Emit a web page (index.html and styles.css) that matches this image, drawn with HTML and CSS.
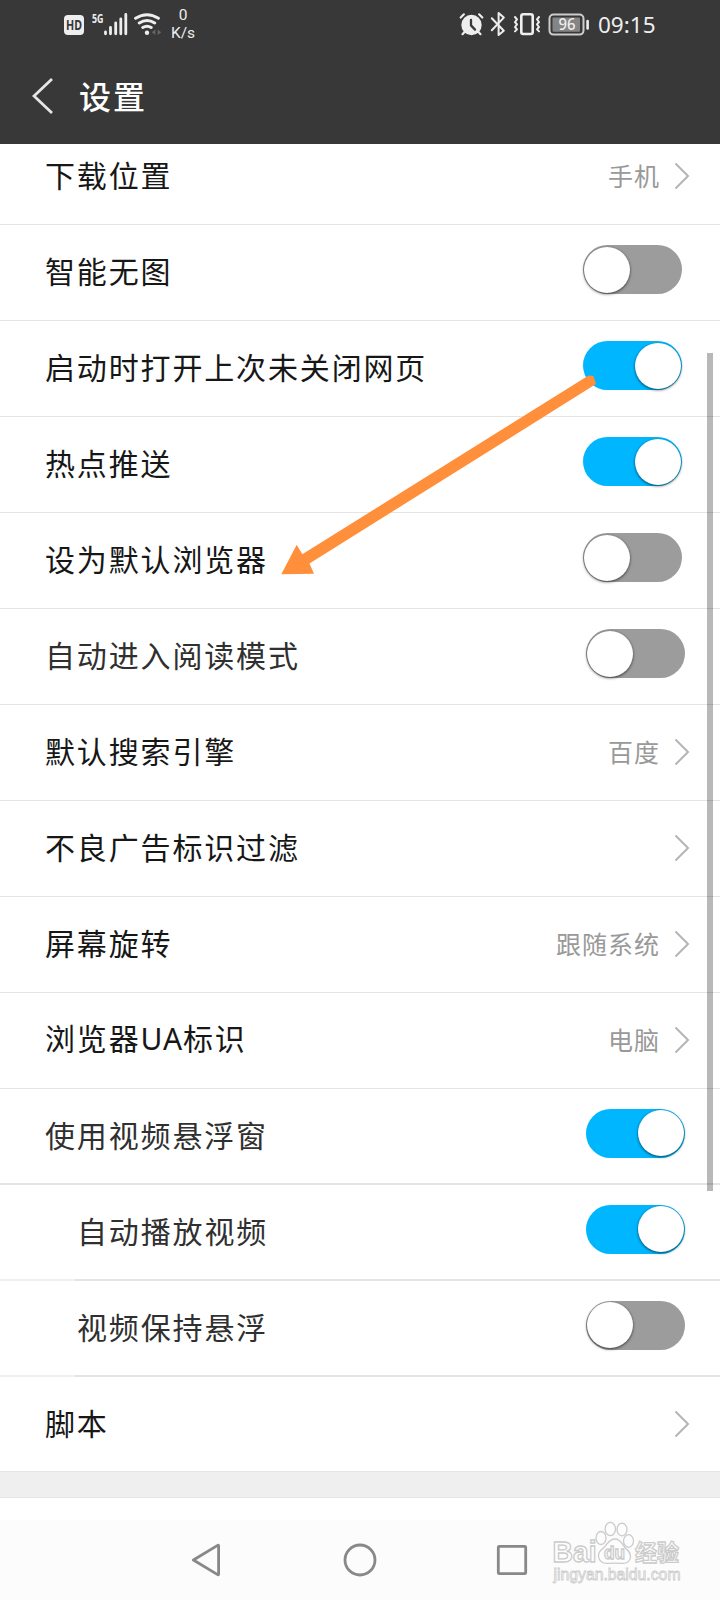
FILE: index.html
```html
<!DOCTYPE html>
<html lang="zh-CN">
<head>
    <meta charset="UTF-8">
    <meta name="viewport" content="width=device-width, initial-scale=1.0">
    <title>设置</title>
    <link rel="stylesheet" href="styles.css">
</head>
<body>
    <div class="app-container">
        <!-- Header -->
        <header class="app-header">
            <div class="status-bar">
                <div class="status-left">
                    <svg width="64" height="40" viewBox="64 4 64 40">
                        <rect x="64" y="15" width="20" height="20" rx="4" fill="#eee"/>
                        <text class="hd" x="66" y="30" textLength="16" lengthAdjust="spacingAndGlyphs">HD</text>
                        <text class="net" x="92" y="22.6" textLength="11.5" lengthAdjust="spacingAndGlyphs">5G</text>
                        <path d="M105.5 32v1.8M110.5 27.5v6.3M115.7 23v10.8M120.8 19v14.8M125.8 14.5v19.3" stroke="#eee" stroke-width="2.8" stroke-linecap="round"/>
                    </svg>
                    <svg class="wifi" width="30" height="26" viewBox="133 11 30 26" fill="none" stroke="#eee" stroke-width="3" stroke-linecap="round">
                        <path d="M135.6 18.3q11.4-7.2 22.8 0M139.3 23q7.7-5 15.4 0M142.8 27.5q4.2-2.6 8.4 0"/>
                        <circle cx="147" cy="32.8" r="2.2" fill="#eee" stroke="none"/>
                        <path d="M155.3 29.5v5.5l-3.5-2.7zM157.7 29.5v5.5l3.5-2.7z" fill="#666" stroke="none"/>
                    </svg>
                    <div class="net-speed">
                        <span>0</span>
                        <span>K/s</span>
                    </div>
                </div>
                <div class="status-right">
                    <svg width="132" height="26" viewBox="458 11 132 26" fill="none" stroke="#eee" stroke-linecap="round" stroke-linejoin="round">
                        <!-- alarm -->
                        <circle cx="471.5" cy="25" r="10.2" fill="#eee" stroke="none"/>
                        <path d="M460.7 17.5l3.2-3.2M482.3 17.5l-3.2-3.2M464.5 32l-2 2.2M478.5 32l2 2.2" stroke-width="2.2"/>
                        <path d="M471 20v5.4l4 4.2" stroke="#383838" stroke-width="2.3"/>
                        <!-- bluetooth -->
                        <path d="M491.8 18.2l12 12.6-5.2 4.2V13l5.2 4.6-12 12.6" stroke-width="2"/>
                        <!-- vibrate -->
                        <rect x="521.3" y="14.2" width="11.4" height="19.8" rx="2" stroke-width="2.6"/>
                        <path d="M515 17l2 2.4-2 2.6 2 2.4-2 2.6 2 2.4-2 2M539 17l-2 2.4 2 2.6-2 2.4 2 2.6-2 2.4 2 2" stroke-width="2"/>
                        <!-- battery -->
                        <rect x="549.5" y="14.6" width="34" height="20" rx="4" stroke="#ccc" stroke-width="2"/>
                        <rect x="552.5" y="17.5" width="27.5" height="14.2" rx="1" fill="#858585" stroke="none"/>
                        <path d="M587.6 21v7.5" stroke-width="2.6"/>
                        <text class="battery-level" x="558.5" y="30" textLength="17" lengthAdjust="spacingAndGlyphs">96</text>
                    </svg>
                    <span class="clock">09:15</span>
                </div>
            </div>
            <div class="title-bar">
                <svg class="back" width="22" height="38" viewBox="0 0 22 38">
                    <path d="M20 2L2 19 20 36" fill="none" stroke="#e6e6e6" stroke-width="2.8"/>
                </svg>
                <h1 class="title">设置</h1>
            </div>
        </header>

        <!-- Settings list -->
        <main class="settings">
            <div class="settings-list">
                <div class="row">
                    <span class="label">下载位置</span>
                    <span class="value">手机</span>
                    <svg class="arrow" viewBox="0 0 16 28"><path d="M1.5 1.5L14 14 1.5 26.5"/></svg>
                </div>
                <div class="row">
                    <span class="label">智能无图</span>
                    <span class="switch"></span>
                </div>
                <div class="row">
                    <span class="label">启动时打开上次未关闭网页</span>
                    <span class="switch on"></span>
                </div>
                <div class="row">
                    <span class="label">热点推送</span>
                    <span class="switch on"></span>
                </div>
                <div class="row">
                    <span class="label">设为默认浏览器</span>
                    <span class="switch"></span>
                </div>
                <div class="row soft">
                    <span class="label">自动进入阅读模式</span>
                    <span class="switch"></span>
                </div>
                <div class="row">
                    <span class="label">默认搜索引擎</span>
                    <span class="value">百度</span>
                    <svg class="arrow" viewBox="0 0 16 28"><path d="M1.5 1.5L14 14 1.5 26.5"/></svg>
                </div>
                <div class="row">
                    <span class="label">不良广告标识过滤</span>
                    <svg class="arrow" viewBox="0 0 16 28"><path d="M1.5 1.5L14 14 1.5 26.5"/></svg>
                </div>
                <div class="row">
                    <span class="label">屏幕旋转</span>
                    <span class="value">跟随系统</span>
                    <svg class="arrow" viewBox="0 0 16 28"><path d="M1.5 1.5L14 14 1.5 26.5"/></svg>
                </div>
                <div class="row">
                    <span class="label">浏览器<span class="latin">UA</span>标识</span>
                    <span class="value">电脑</span>
                    <svg class="arrow" viewBox="0 0 16 28"><path d="M1.5 1.5L14 14 1.5 26.5"/></svg>
                </div>
                <div class="row soft thick">
                    <span class="label">使用视频悬浮窗</span>
                    <span class="switch on"></span>
                </div>
                <div class="row soft sub">
                    <span class="label">自动播放视频</span>
                    <span class="switch on"></span>
                </div>
                <div class="row soft sub">
                    <span class="label">视频保持悬浮</span>
                    <span class="switch"></span>
                </div>
                <div class="row last">
                    <span class="label">脚本</span>
                    <svg class="arrow" viewBox="0 0 16 28"><path d="M1.5 1.5L14 14 1.5 26.5"/></svg>
                </div>
            </div>
            <div class="section-gap"></div>
        </main>

        <!-- System navigation -->
        <nav class="nav-bar">
            <svg width="336" height="40" viewBox="192 1540 336 40" fill="none" stroke="#888" stroke-width="2.8" stroke-linejoin="round">
                <path d="M193.4 1560l24.2-14.6q1-.6 1 .6v28q0 1.2-1 .6z"/>
                <circle cx="360" cy="1560" r="15"/>
                <rect x="498.3" y="1546.3" width="27.4" height="27.4" rx="1"/>
            </svg>
        </nav>

        <div class="scrollbar"></div>

        <svg class="pointer" width="320" height="204" viewBox="279 373 320 204">
            <path d="M281.3 574.3L296.7 544.7 302.3 554.3 588.5 375.5 593.5 376 596 384 309.5 563.5 314 573.7z" fill="#ff8f3a"/>
        </svg>

        <svg class="watermark" width="136" height="68" viewBox="550 1518 136 68">
            <g fill="#fdfdfd" stroke="#cbcbcb" stroke-width="1.3">
                <text class="wm-logo" x="552.5" y="1562" textLength="44" lengthAdjust="spacingAndGlyphs">Bai</text>
                <ellipse cx="601" cy="1538" rx="5" ry="6.5"/>
                <ellipse cx="610.3" cy="1529" rx="5.2" ry="6.6"/>
                <ellipse cx="622" cy="1529.5" rx="5" ry="6.3"/>
                <ellipse cx="628.5" cy="1541" rx="5" ry="6.3"/>
                <path d="M615 1539c-6 0-7.5 5-11 8.5-4 3.5-6 5-5.5 9 .8 5 5 7 9.5 6.8 5-.3 9-.3 14 0 5 .2 8-2 8.5-6.3.4-4-2-6-5.5-9.5-3.2-3.5-4.5-8.5-10-8.5z"/>
                <text class="wm-du" x="604" y="1559" textLength="21" lengthAdjust="spacingAndGlyphs">du</text>
                <text class="wm-cn" x="635" y="1561" textLength="44" lengthAdjust="spacingAndGlyphs">经验</text>
                <text class="wm-url" x="553.5" y="1579.5" textLength="127" lengthAdjust="spacingAndGlyphs">jingyan.baidu.com</text>
            </g>
        </svg>
    </div>
</body>
</html>
```
FILE: styles.css
```css
:root {
    --header: #383838;
    --text: #171717;
    --text-soft: #303030;
    --muted: #999;
    --line: #e4e4e4;
    --on: #00b7ff;
    --off: #9c9c9c;
}

* {
    margin: 0;
    padding: 0;
    box-sizing: border-box;
}

body {
    font-family: "Noto Sans CJK SC", sans-serif;
    background: #fff;
    color: var(--text);
}

.app-container {
    position: relative;
    width: 720px;
    height: 1600px;
    display: flex;
    flex-direction: column;
    overflow: hidden;
}

/* Header */
.app-header {
    height: 144px;
    background: var(--header);
    color: #eee;
}

.status-bar {
    height: 48px;
    padding: 0 64px;
    display: flex;
    justify-content: space-between;
    align-items: center;
}

.status-left,
.status-right {
    display: flex;
    align-items: center;
}

.status-bar text {
    fill: #eee;
    stroke: none;
}

.status-bar .hd {
    font: bold 14px "Noto Sans", sans-serif;
    fill: var(--header);
}

.net {
    font: bold 13px "Noto Sans", sans-serif;
}

.battery-level {
    font: 500 16px "Noto Sans", sans-serif;
}

.wifi {
    margin-left: 5px;
}

.net-speed {
    margin-left: 8px;
    display: flex;
    flex-direction: column;
    align-items: center;
    font: 15.5px/18px Roboto, sans-serif;
}

.clock {
    margin: 2px 0 0 8px;
    width: 58px;
    font: 22.5px/26px "Noto Sans", sans-serif;
}

.title-bar {
    height: 96px;
    padding-left: 32px;
    display: flex;
    align-items: center;
}

.title {
    margin: 0 0 2px 25px;
    font-size: 32px;
    line-height: 40px;
    font-weight: 500;
    letter-spacing: 2px;
    color: #fff;
}

/* Settings list, scrolled a little under the header */
.settings {
    height: 1376px;
    overflow: hidden;
}

.settings-list {
    margin-top: -15px;
}

.row {
    height: 96px;
    padding: 0 30px 0 45px;
    display: flex;
    align-items: center;
    border-bottom: 1px solid var(--line);
}

.label {
    flex: 1;
    margin-bottom: 5px;
    font-size: 30px;
    line-height: 40px;
    letter-spacing: 1.85px;
    white-space: nowrap;
}

.latin {
    font-family: "Noto Sans", sans-serif;
    letter-spacing: 0.8px;
}

.value {
    margin: 0 14px 3px 0;
    font-size: 25px;
    line-height: 34px;
    letter-spacing: 1px;
    color: var(--muted);
}

.arrow {
    width: 16px;
    height: 28px;
    margin-bottom: 1px;
    fill: none;
    stroke: #b4b4b4;
    stroke-width: 2;
}

.switch {
    width: 99px;
    height: 49px;
    margin: 0 8px 6px 0;
    padding: 1.5px 1px;
    display: flex;
    border-radius: 25px;
    background: var(--off);
}

.switch::after {
    content: "";
    width: 46px;
    height: 46px;
    border-radius: 50%;
    background: #fff;
    box-shadow: 0 1px 3px rgba(0, 0, 0, 0.65);
}

.switch.on {
    justify-content: flex-end;
    background: var(--on);
}

.soft {
    color: var(--text-soft);
}

.soft .switch {
    margin-right: 5px;
}

.thick,
.sub {
    border-bottom-width: 2px;
}

.sub {
    padding-left: 77px;
    border-image: linear-gradient(90deg, #f0f0f0 76px, var(--line) 76px) 1;
    border-image-width: 0 0 2px;
}

.last {
    height: 94px;
    border-bottom: none;
}

.section-gap {
    height: 27px;
    background: #efefef;
    border-top: 1px solid #e5e5e5;
    border-bottom: 1px solid #e5e5e5;
}

/* System navigation */
.nav-bar {
    height: 80px;
    display: flex;
    align-items: center;
    justify-content: center;
    background: #fcfcfc;
}

/* Overlays */
.scrollbar {
    position: absolute;
    top: 353px;
    right: 7px;
    width: 6px;
    height: 838px;
    background: rgba(0, 0, 0, 0.28);
}

.pointer {
    position: absolute;
    top: 373px;
    left: 279px;
}

.watermark {
    position: absolute;
    top: 1518px;
    left: 550px;
}

.wm-logo {
    font: bold 29px "Liberation Sans", sans-serif;
}

.wm-du {
    font: bold 18px "Liberation Sans", sans-serif;
}

.wm-cn {
    font: bold 23px "Noto Sans CJK SC", sans-serif;
}

.wm-url {
    font: 16px "Liberation Sans", sans-serif;
    stroke-width: 0.8;
}
```
